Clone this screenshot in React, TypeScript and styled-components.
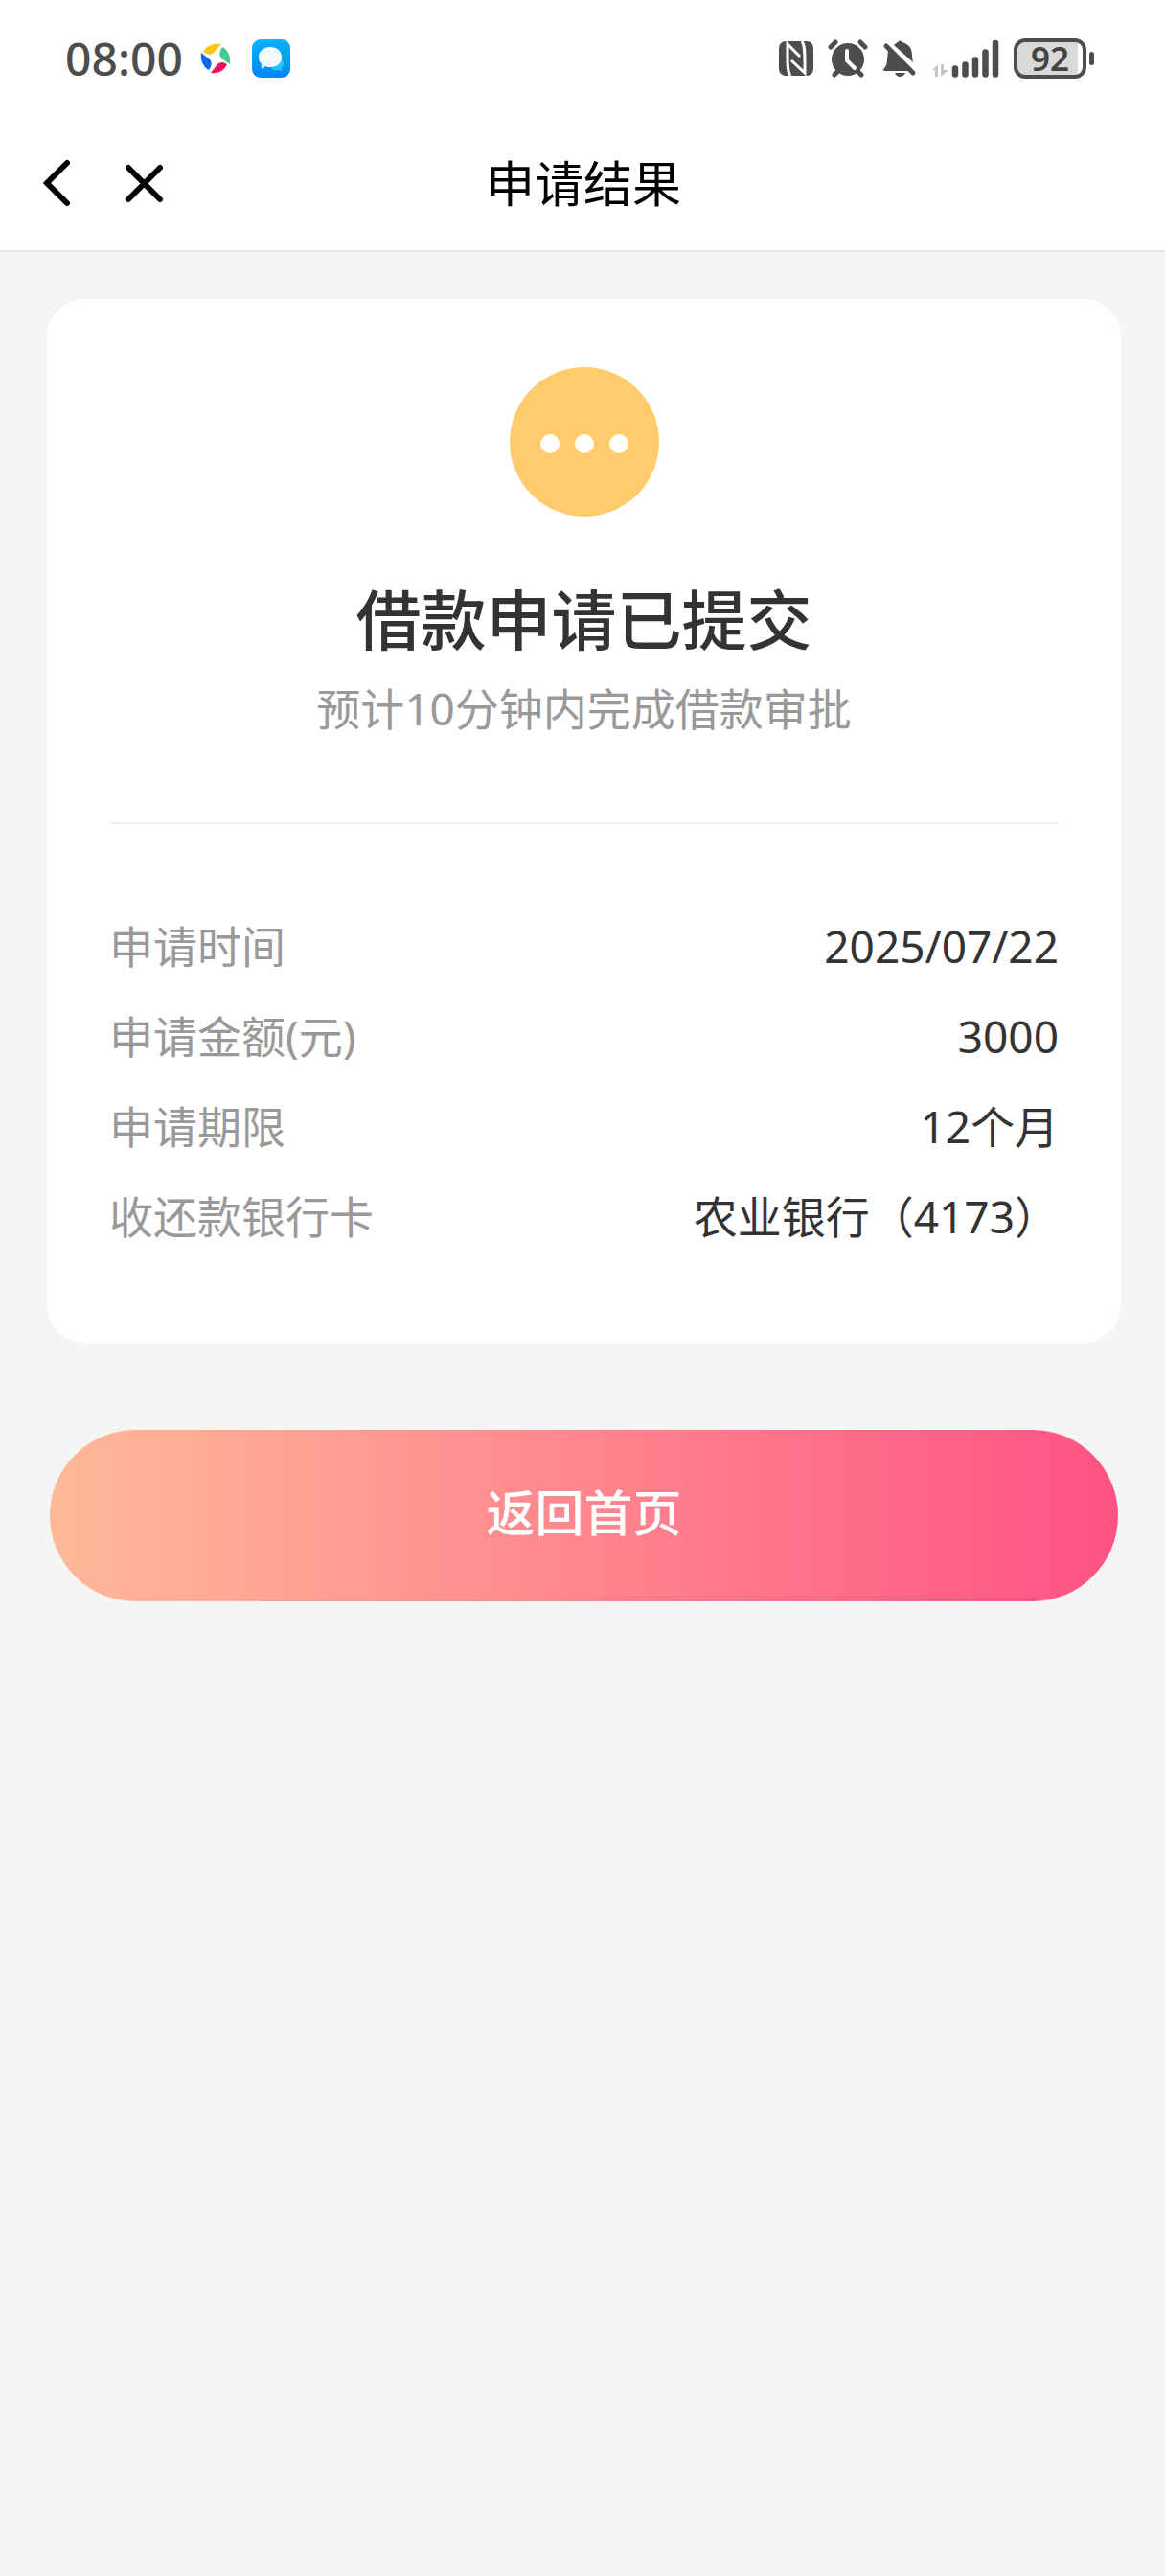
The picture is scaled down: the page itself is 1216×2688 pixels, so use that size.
import React from "react";
import styled, { createGlobalStyle } from "styled-components";

const GlobalStyle = createGlobalStyle`
  *, *::before, *::after { box-sizing: border-box; }
  body {
    margin: 0;
    background: #f5f5f5;
    font-family: "Noto Sans", "Noto Sans CJK SC", sans-serif;
    color: #333333;
  }
`;

const Top = styled.header`
  background: #ffffff;
  border-bottom: 2px solid #e4e4e4;
`;

const StatusBar = styled.div`
  display: flex;
  align-items: center;
  justify-content: space-between;
  height: 122px;
  padding: 0 74px 0 68px;
  color: #4d4d4d;
`;

const StatusGroup = styled.div<{ $gap: number }>`
  display: flex;
  align-items: center;
  gap: ${(p) => p.$gap}px;
`;

const Clock = styled.time`
  font-size: 48px;
  line-height: 60px;
  font-weight: 500;
`;

const AppIcons = styled.span`
  display: flex;
  align-items: center;
  gap: 22px;
  margin-left: 18px;
`;

const Battery = styled.div`
  display: flex;
  align-items: center;
  gap: 3px;
`;

const BatteryBody = styled.span`
  display: flex;
  align-items: center;
  justify-content: center;
  width: 76px;
  height: 42px;
  border: 4px solid #4d4d4d;
  border-radius: 12px;
  background: linear-gradient(90deg, #d9d9d9 92%, #ffffff 92%);
  font-size: 35px;
  line-height: 34px;
  font-weight: 600;
  color: #444444;
`;

const BatteryTip = styled.span`
  width: 5px;
  height: 14px;
  border-radius: 3px;
  background: #4d4d4d;
`;

const NavBar = styled.nav`
  display: grid;
  grid-template-columns: 1fr auto 1fr;
  align-items: center;
  height: 139px;
  padding: 0 40px 2px 42px;
`;

const NavActions = styled.div`
  display: flex;
  gap: 47px;
`;

const IconButton = styled.button`
  display: flex;
  padding: 0;
  border: 0;
  background: none;
  color: #000000;
  cursor: pointer;
`;

const NavTitle = styled.h1`
  margin: 0;
  font-size: 51px;
  line-height: 60px;
  font-weight: 400;
  color: #000000;
`;

const Main = styled.main`
  padding: 49px 46px 49px 49px;
`;

const Card = styled.section`
  display: flex;
  flex-direction: column;
  padding: 71px 65px 85px;
  border-radius: 40px;
  background: #ffffff;
  text-align: center;
`;

const PendingBadge = styled.span`
  display: flex;
  align-self: center;
  align-items: center;
  justify-content: center;
  gap: 16px;
  width: 156px;
  height: 156px;
  padding-top: 4px;
  border-radius: 50%;
  background: #ffcb6d;
`;

const Dot = styled.i`
  width: 20px;
  height: 20px;
  border-radius: 50%;
  background: #ffffff;
`;

const Headline = styled.h2`
  margin: 68px 0 0;
  font-size: 68px;
  line-height: 80px;
  font-weight: 500;
`;

const Hint = styled.p`
  margin: 22px 0 0;
  font-size: 46px;
  line-height: 60px;
  color: #999999;
`;

const Divider = styled.hr`
  align-self: stretch;
  height: 2px;
  margin: 89px 0 80px;
  border: 0;
  background: #f0f0f0;
`;

const Details = styled.dl`
  margin: 0;
`;

const DetailRow = styled.div`
  display: flex;
  justify-content: space-between;
  font-size: 46px;
  line-height: 94px;
`;

const Label = styled.dt`
  color: #999999;
`;

const Value = styled.dd`
  margin: 0;
`;

const Actions = styled.div`
  display: flex;
  margin-top: 91px;
  padding: 0 3px;
`;

const HomeButton = styled.button`
  flex: 1;
  height: 179px;
  padding: 0 0 8px;
  border: 0;
  border-radius: 90px;
  background: linear-gradient(90deg, #ffb998, #ff5284);
  font-family: inherit;
  font-size: 51px;
  line-height: 60px;
  font-weight: 500;
  color: #ffffff;
  cursor: pointer;
`;

const PinwheelIcon = () => (
  <svg width="32" height="32" viewBox="0 0 32 32" aria-hidden="true">
    <path d="M3 9C7 2 14 0 22 1L14 10Q9 14 3 9Z" fill="#f7c815" />
    <path d="M23 4C29 7 32 14 31 22L22 16Q18 11 23 4Z" fill="#42cc94" />
    <path d="M28 22C25 29 18 32 11 31L18 22Q22 18 28 22Z" fill="#f20d5c" />
    <path d="M1 10L10 17Q14 21 9 28C3 25 0 18 1 10Z" fill="#1268e3" />
  </svg>
);

const ChatAppIcon = () => (
  <svg width="40" height="40" viewBox="0 0 40 40" aria-hidden="true">
    <defs>
      <linearGradient id="chat-bg" x1="0" y1="0" x2="0" y2="1">
        <stop offset="0" stopColor="#08b2fb" />
        <stop offset="1" stopColor="#0584f7" />
      </linearGradient>
    </defs>
    <rect width="40" height="40" rx="9" fill="url(#chat-bg)" />
    <path d="M21 31Q18 25 25 21Q31 18 33 23Q34 27 31 30L32 33Q29 33 27 32Q24 33 21 31Z" fill="#22c5f3" />
    <path d="M19 8C26 8 31 12 31 19C31 25 26 29 19 29C17 29 16 29 14 28L11 31Q9 29 10 26Q7 23 7 19C7 12 12 8 19 8Z" fill="#f3fbff" />
  </svg>
);

const NfcIcon = () => (
  <svg width="36" height="36" viewBox="0 0 36 36" fill="none" aria-hidden="true">
    <rect width="36" height="36" rx="7" fill="#4d4d4d" />
    <path d="M12 36C9 32 9 25 9 16V3L22 16" stroke="#ffffff" strokeWidth="3" />
    <path d="M24 0C27 4 27 11 27 20V33L13 20" stroke="#ffffff" strokeWidth="3" />
  </svg>
);

const AlarmIcon = () => (
  <svg width="42" height="40" viewBox="0 0 42 40" aria-hidden="true">
    <circle cx="21" cy="21" r="17" fill="#4d4d4d" />
    <path d="M3 8L8 3M34 3L39 8M7 37L11 33M35 37L31 33" stroke="#4d4d4d" strokeWidth="5" strokeLinecap="round" />
    <path d="M20 12V22L28 30" stroke="#ffffff" strokeWidth="4" fill="none" strokeLinecap="round" strokeLinejoin="round" />
  </svg>
);

const MutedBellIcon = () => (
  <svg width="36" height="40" viewBox="0 0 36 40" aria-hidden="true">
    <path d="M6 11L27 33H2Q0 32 2 30Q5 27 5 21Z" fill="#4d4d4d" />
    <path d="M12 6Q14 4 16 3Q18 0 21 3Q31 6 31 16Q31 20 32 24Z" fill="#4d4d4d" />
    <path d="M13 35H24Q22 39 18 39Q15 39 13 35Z" fill="#4d4d4d" />
    <path d="M4 7L32 35" stroke="#4d4d4d" strokeWidth="5" strokeLinecap="round" />
  </svg>
);

const SignalIcon = () => (
  <svg width="71" height="40" viewBox="0 0 71 40" aria-hidden="true">
    <path d="M1 32L7 26V39H4V32ZM10 26H13V32H18L10 39Z" fill="#c4c4c4" />
    <path d="M25 30.500V36.500M35.500 26.500V36.500M46 21.500V36.500M56.500 13.500V36.500M67 4V36.500" stroke="#4d4d4d" strokeWidth="6.500" strokeLinecap="round" />
  </svg>
);

const BackIcon = () => (
  <svg width="36" height="54" viewBox="0 0 36 54" fill="none" stroke="currentColor" aria-hidden="true">
    <path d="M28 6L7 27L28 48" strokeWidth="6" strokeLinecap="round" strokeLinejoin="miter" />
  </svg>
);

const CloseIcon = () => (
  <svg width="50" height="54" viewBox="0 0 50 54" fill="none" stroke="currentColor" aria-hidden="true">
    <path d="M9 11L42 44M42 11L9 44" strokeWidth="6" strokeLinecap="round" />
  </svg>
);

const details = [
  { label: "申请时间", value: "2025/07/22" },
  { label: "申请金额(元)", value: "3000" },
  { label: "申请期限", value: "12个月" },
  { label: "收还款银行卡", value: "农业银行（4173）" },
];

export default function App() {
  return (
    <>
      <GlobalStyle />
      <Top>
        <StatusBar>
          <StatusGroup $gap={0}>
            <Clock>08:00</Clock>
            <AppIcons>
              <PinwheelIcon />
              <ChatAppIcon />
            </AppIcons>
          </StatusGroup>
          <StatusGroup $gap={15}>
            <NfcIcon />
            <AlarmIcon />
            <MutedBellIcon />
            <SignalIcon />
            <Battery>
              <BatteryBody>92</BatteryBody>
              <BatteryTip />
            </Battery>
          </StatusGroup>
        </StatusBar>
        <NavBar>
          <NavActions>
            <IconButton type="button" aria-label="返回">
              <BackIcon />
            </IconButton>
            <IconButton type="button" aria-label="关闭">
              <CloseIcon />
            </IconButton>
          </NavActions>
          <NavTitle>申请结果</NavTitle>
        </NavBar>
      </Top>
      <Main>
        <Card>
          <PendingBadge>
            <Dot />
            <Dot />
            <Dot />
          </PendingBadge>
          <Headline>借款申请已提交</Headline>
          <Hint>预计10分钟内完成借款审批</Hint>
          <Divider />
          <Details>
            {details.map((item) => (
              <DetailRow key={item.label}>
                <Label>{item.label}</Label>
                <Value>{item.value}</Value>
              </DetailRow>
            ))}
          </Details>
        </Card>
        <Actions>
          <HomeButton type="button">返回首页</HomeButton>
        </Actions>
      </Main>
    </>
  );
}
